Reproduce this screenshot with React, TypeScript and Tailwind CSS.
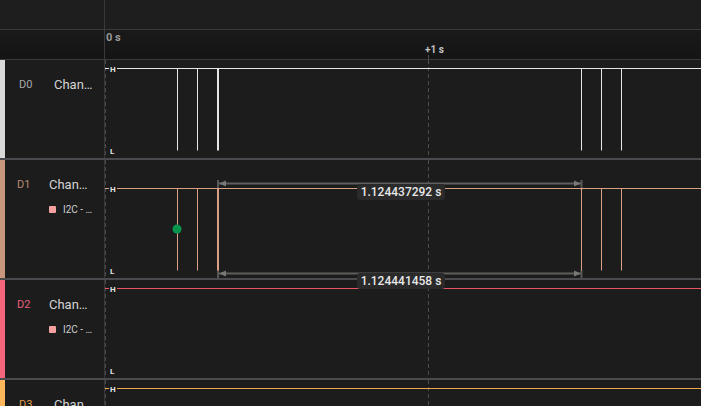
import React from "react";

const PLUS1 = 323.5; // +1 s marker, relative to the waveform area

type Channel = {
  id: string;
  labelColor: string;
  barColor: string;
  lineColor: string;
  analyzer: boolean;
};

const channels: Channel[] = [
  { id: "D0", labelColor: "text-[#a9a9a9]", barColor: "bg-[#d9d9d9]", lineColor: "#e6e6e6", analyzer: false },
  { id: "D1", labelColor: "text-[#b78c72]", barColor: "bg-[#c9977c]", lineColor: "#d9a086", analyzer: true },
  { id: "D2", labelColor: "text-[#e8607a]", barColor: "bg-[#f5667c]", lineColor: "#ea5565", analyzer: true },
  { id: "D3", labelColor: "text-[#e4a050]", barColor: "bg-[#ffb55a]", lineColor: "#f2a64a", analyzer: false },
];

const pulses = [
  { x: 72.5, w: 1 },
  { x: 92.5, w: 1 },
  { x: 113, w: 2 },
  { x: 476.5, w: 1 },
  { x: 496.5, w: 1 },
  { x: 516.5, w: 1 },
];

const ChannelLabel = ({ ch }: { ch: Channel }) => (
  <div className="flex w-[105px] shrink-0 border-r border-[#38383a] h-full">
    <div className={`w-[5px] h-full ${ch.barColor}`} />
    <div className={`flex flex-col ${ch.analyzer ? "pl-[12px]" : "pl-[14px]"}`}>
      <div className="flex items-center h-[18px] mt-[16px]">
        <span className={`text-[11px] ${ch.labelColor} ${ch.analyzer ? "w-[32px]" : "w-[35px]"}`}>
          {ch.id}
        </span>
        <span className="text-[13px] text-[#d4d4d4]">Chan…</span>
      </div>
      {ch.analyzer && (
        <div className="flex items-center gap-[7px] h-[14px] mt-[8px] ml-[32px]">
          <span className="w-[7px] h-[7px] rounded-[1px] bg-[#f4a0a0]" />
          <span className="text-[10px] text-[#cfcfcf]">I2C - …</span>
        </div>
      )}
    </div>
  </div>
);

const LevelTag = ({ t, top }: { t: string; top: number }) => (
  <span
    className="absolute left-[4px] px-[1px] bg-[#1c1c1c] text-[8px] leading-[9px] font-bold text-[#e4e4e4]"
    style={{ top }}
  >
    {t}
  </span>
);

const Bracket = ({ y, t1, t2 }: { y: number; t1: number; t2: number }) => (
  <g>
    <line x1={113} y1={y} x2={476} y2={y} stroke="#5e5e5e" strokeWidth={2} />
    <line x1={113} y1={t1} x2={113} y2={t2} stroke="#575757" strokeWidth={2} />
    <line x1={476.5} y1={t1} x2={476.5} y2={t2} stroke="#575757" strokeWidth={2} />
    <polygon points={`114,${y} 121,${y - 3} 121,${y + 3}`} fill="#777" />
    <polygon points={`476,${y} 469,${y - 3} 469,${y + 3}`} fill="#777" />
  </g>
);

const Measure = ({ top, text }: { top: number; text: string }) => (
  <div
    className="absolute z-10 left-[252px] w-[88px] h-[16px] flex items-center justify-center rounded-[3px] bg-[#2a2a2a] text-[12px] font-medium text-[#e8e8e8]"
    style={{ top }}
  >
    {text}
  </div>
);

const Wave = ({ ch, h, hy, pulsed }: { ch: Channel; h: number; hy: number; pulsed: boolean }) => (
  <div className="relative flex-1 h-full">
    <svg width={596} height={h} className="block">
      <line x1={0.5} y1={0} x2={0.5} y2={h} stroke="#4a4a4a" strokeDasharray="4 3" />
      <line x1={PLUS1} y1={0} x2={PLUS1} y2={h} stroke="#4d4d4d" strokeDasharray="4 3" />
      {ch.id === "D1" && (
        <>
          <Bracket y={23.5} t1={20} t2={30} />
          <Bracket y={113.5} t1={110} t2={118} />
        </>
      )}
      <line x1={0} y1={hy} x2={596} y2={hy} stroke={ch.lineColor} strokeWidth={1} />
      {pulsed &&
        pulses.map((p, i) => (
          <line key={i} x1={p.x} y1={hy} x2={p.x} y2={hy + 82} stroke={ch.lineColor} strokeWidth={p.w} />
        ))}
      {ch.id === "D1" && <circle cx={72} cy={69} r={4.5} fill="#07954e" />}
    </svg>
    <LevelTag t="H" top={hy - 4} />
    <LevelTag t="L" top={hy + 78} />
    {ch.id === "D1" && (
      <>
        <Measure top={24} text="1.124437292 s" />
        <Measure top={113} text="1.124441458 s" />
      </>
    )}
  </div>
);

export default function App() {
  return (
    <div className="w-[701px] h-[406px] overflow-hidden bg-[#1c1c1c] font-['Roboto',sans-serif]">
      {/* toolbar strip */}
      <div className="flex h-[30px] border-b border-[#3a3a3a] bg-[#1e1e1e]">
        <div className="w-[105px] border-r border-[#3a3a3a]" />
        <div className="flex-1" />
      </div>

      {/* time ruler */}
      <div className="flex h-[30px] border-b border-[#3a3a3a] bg-gradient-to-b from-[#1a1a1a] to-[#141414]">
        <div className="w-[105px] border-r border-[#3a3a3a]" />
        <div className="relative flex-1">
          <span className="absolute left-[1px] top-[2px] text-[11px] leading-none font-bold text-[#9a9a9a]">0 s</span>
          <span className="absolute left-[320px] top-[15px] text-[10px] leading-none font-bold text-[#c4c4c4]">+1 s</span>
          <svg width={596} height={29} className="block">
            <line x1={PLUS1} y1={25} x2={PLUS1} y2={29} stroke="#4d4d4d" />
          </svg>
        </div>
      </div>

      {/* channel rows */}
      <div className="flex h-[100px] border-b-2 border-[#4b4b4f]">
        <ChannelLabel ch={channels[0]} />
        <Wave ch={channels[0]} h={98} hy={8.5} pulsed />
      </div>
      <div className="flex h-[120px] border-b-2 border-[#4b4b4f]">
        <ChannelLabel ch={channels[1]} />
        <Wave ch={channels[1]} h={118} hy={28.5} pulsed />
      </div>
      <div className="flex h-[100px] border-b-2 border-[#4b4b4f]">
        <ChannelLabel ch={channels[2]} />
        <Wave ch={channels[2]} h={98} hy={8.5} pulsed={false} />
      </div>
      <div className="flex h-[100px]">
        <ChannelLabel ch={channels[3]} />
        <Wave ch={channels[3]} h={98} hy={8.5} pulsed={false} />
      </div>
    </div>
  );
}
